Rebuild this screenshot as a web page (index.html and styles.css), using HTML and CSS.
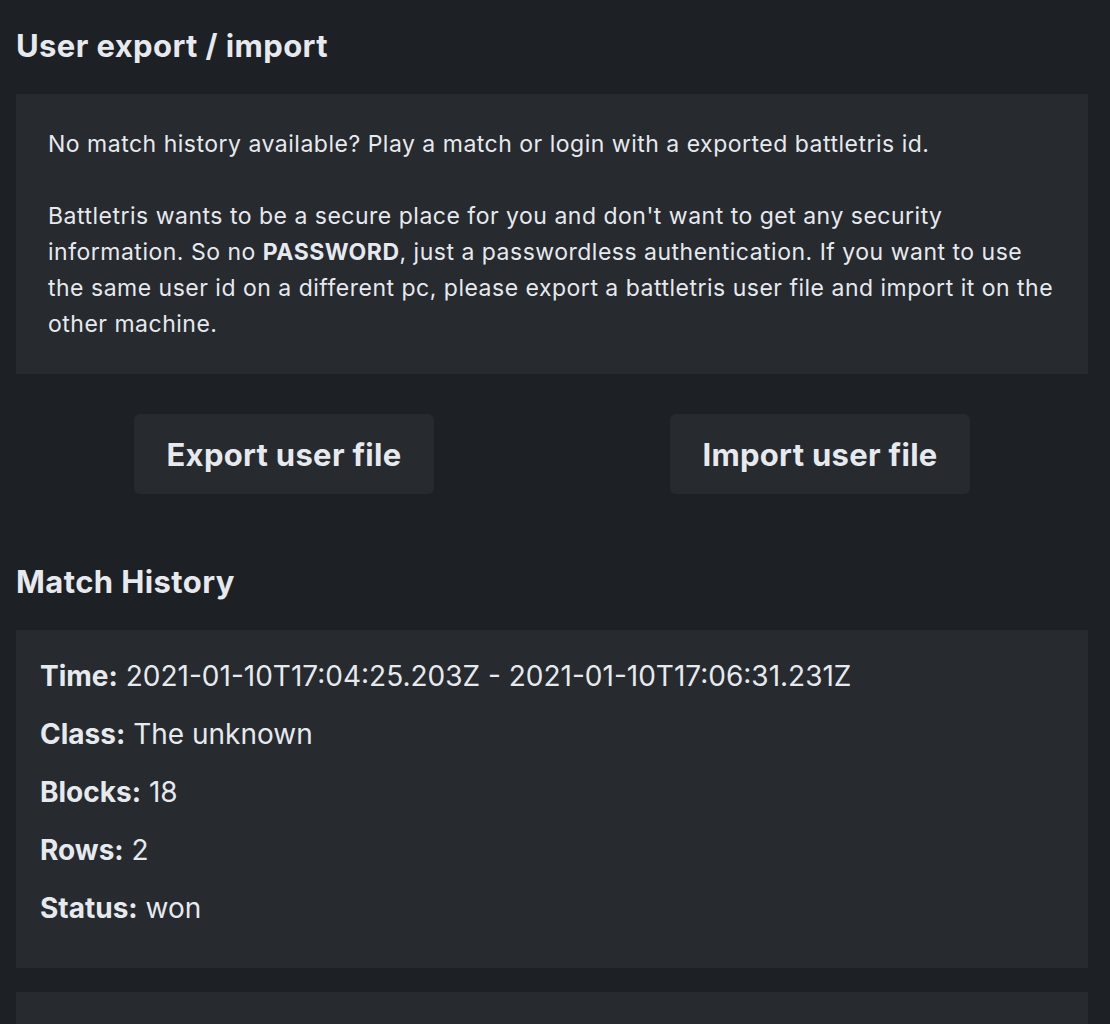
FILE: index.html
```html
<!DOCTYPE html>
<html>
<head>
<meta charset="utf-8">
<link rel="stylesheet" href="styles.css">
</head>
<body>
<main class="page">
  <h2 class="title">User export / import</h2>
  <div class="card info">
    No match history available? Play a match or login with a exported battletris id.<br><br>
    Battletris wants to be a secure place for you and don't want to get any security information. So no <b>PASSWORD</b>, just a passwordless authentication. If you want to use the same user id on a different pc, please export a battletris user file and import it on the other machine.
  </div>
  <div class="actions">
    <div class="action-col"><button class="btn">Export user file</button></div>
    <div class="action-col"><button class="btn">Import user file</button></div>
  </div>
  <h2 class="title history-title">Match History</h2>
  <div class="card match">
    <p><b>Time:</b> 2021-01-10T17:04:25.203Z - 2021-01-10T17:06:31.231Z</p>
    <p><b>Class:</b> The unknown</p>
    <p><b>Blocks:</b> 18</p>
    <p><b>Rows:</b> 2</p>
    <p><b>Status:</b> won</p>
  </div>
  <div class="card match"></div>
</main>
</body>
</html>
```
FILE: styles.css
```css
html, body {
  margin: 0;
  padding: 0;
  background: #1d2024;
}
body {
  font-family: Inter, "Noto Sans", sans-serif;
  color: #e6e9ee;
}
.page {
  padding: 28px 22px 0 16px;
}
.title {
  margin: 0;
  font-size: 31px;
  line-height: 36px;
  font-weight: 700;
  letter-spacing: 0.4px;
}
.card {
  background: #272a2e;
}
.info {
  margin-top: 30px;
  padding: 32px 28px 32px 32px;
  font-size: 23px;
  line-height: 36px;
  letter-spacing: 0.5px;
}
.info b {
  font-weight: 700;
}
.actions {
  display: grid;
  grid-template-columns: 1fr 1fr;
  margin-top: 40px;
}
.action-col {
  display: flex;
  justify-content: center;
}
.btn {
  width: 300px;
  height: 80px;
  border: 0;
  border-radius: 6px;
  background: #272a2e;
  color: #e6e9ee;
  font-family: Inter, "Noto Sans", sans-serif;
  font-size: 31px;
  font-weight: 700;
  letter-spacing: 0.3px;
  padding: 0;
}
.history-title {
  margin-top: 70px;
}
.match {
  margin-top: 30px;
  padding: 24px;
  font-size: 28px;
}
.match + .match {
  margin-top: 24px;
  height: 300px;
}
.match p {
  margin: 0 0 14px;
  line-height: 44px;
}
```
